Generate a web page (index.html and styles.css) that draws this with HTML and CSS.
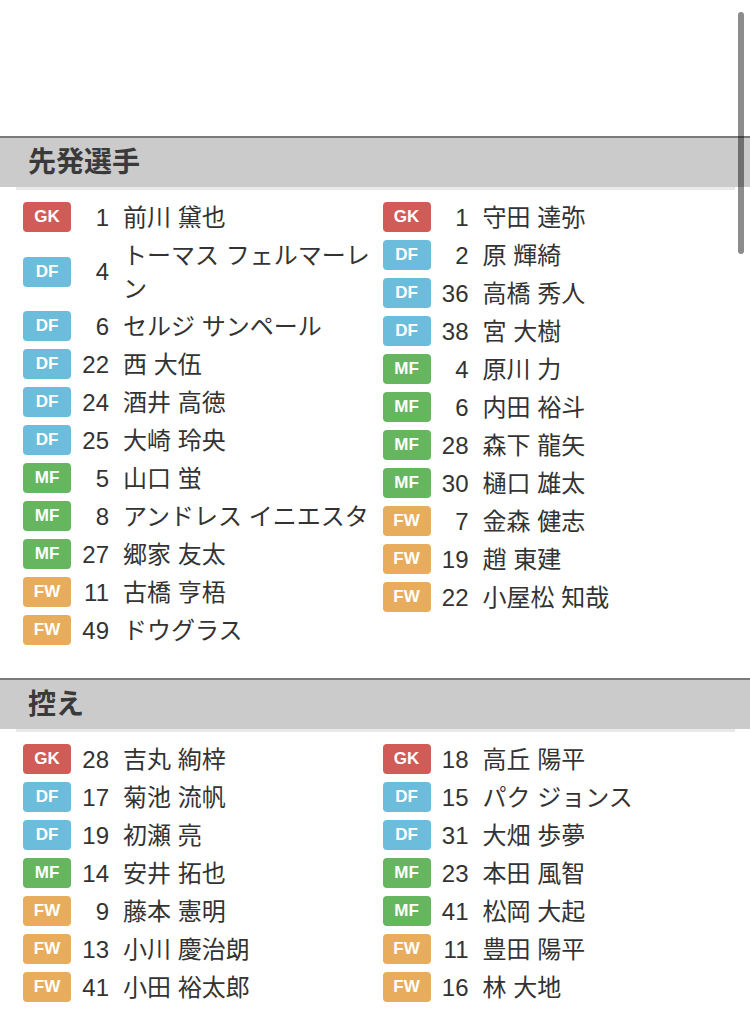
FILE: index.html
```html
<!DOCTYPE html>
<html lang="ja">
<head>
<meta charset="utf-8">
<title>メンバー</title>
<link rel="stylesheet" href="styles.css">
</head>
<body>
<div class="top-space"></div>

<section class="section">
  <h2 class="section-title">先発選手</h2>
  <div class="lineup">
    <ul class="team">
      <li class="row"><span class="badge gk">GK</span><span class="num">1</span><span class="name">前川 黛也</span></li>
      <li class="row"><span class="badge df">DF</span><span class="num">4</span><span class="name">トーマス フェルマーレン</span></li>
      <li class="row"><span class="badge df">DF</span><span class="num">6</span><span class="name">セルジ サンペール</span></li>
      <li class="row"><span class="badge df">DF</span><span class="num">22</span><span class="name">西 大伍</span></li>
      <li class="row"><span class="badge df">DF</span><span class="num">24</span><span class="name">酒井 高徳</span></li>
      <li class="row"><span class="badge df">DF</span><span class="num">25</span><span class="name">大崎 玲央</span></li>
      <li class="row"><span class="badge mf">MF</span><span class="num">5</span><span class="name">山口 蛍</span></li>
      <li class="row"><span class="badge mf">MF</span><span class="num">8</span><span class="name">アンドレス イニエスタ</span></li>
      <li class="row"><span class="badge mf">MF</span><span class="num">27</span><span class="name">郷家 友太</span></li>
      <li class="row"><span class="badge fw">FW</span><span class="num">11</span><span class="name">古橋 亨梧</span></li>
      <li class="row"><span class="badge fw">FW</span><span class="num">49</span><span class="name">ドウグラス</span></li>
    </ul>
    <ul class="team">
      <li class="row"><span class="badge gk">GK</span><span class="num">1</span><span class="name">守田 達弥</span></li>
      <li class="row"><span class="badge df">DF</span><span class="num">2</span><span class="name">原 輝綺</span></li>
      <li class="row"><span class="badge df">DF</span><span class="num">36</span><span class="name">高橋 秀人</span></li>
      <li class="row"><span class="badge df">DF</span><span class="num">38</span><span class="name">宮 大樹</span></li>
      <li class="row"><span class="badge mf">MF</span><span class="num">4</span><span class="name">原川 力</span></li>
      <li class="row"><span class="badge mf">MF</span><span class="num">6</span><span class="name">内田 裕斗</span></li>
      <li class="row"><span class="badge mf">MF</span><span class="num">28</span><span class="name">森下 龍矢</span></li>
      <li class="row"><span class="badge mf">MF</span><span class="num">30</span><span class="name">樋口 雄太</span></li>
      <li class="row"><span class="badge fw">FW</span><span class="num">7</span><span class="name">金森 健志</span></li>
      <li class="row"><span class="badge fw">FW</span><span class="num">19</span><span class="name">趙 東建</span></li>
      <li class="row"><span class="badge fw">FW</span><span class="num">22</span><span class="name">小屋松 知哉</span></li>
    </ul>
  </div>
</section>

<section class="section">
  <h2 class="section-title">控え</h2>
  <div class="lineup">
    <ul class="team">
      <li class="row"><span class="badge gk">GK</span><span class="num">28</span><span class="name">吉丸 絢梓</span></li>
      <li class="row"><span class="badge df">DF</span><span class="num">17</span><span class="name">菊池 流帆</span></li>
      <li class="row"><span class="badge df">DF</span><span class="num">19</span><span class="name">初瀬 亮</span></li>
      <li class="row"><span class="badge mf">MF</span><span class="num">14</span><span class="name">安井 拓也</span></li>
      <li class="row"><span class="badge fw">FW</span><span class="num">9</span><span class="name">藤本 憲明</span></li>
      <li class="row"><span class="badge fw">FW</span><span class="num">13</span><span class="name">小川 慶治朗</span></li>
      <li class="row"><span class="badge fw">FW</span><span class="num">41</span><span class="name">小田 裕太郎</span></li>
    </ul>
    <ul class="team">
      <li class="row"><span class="badge gk">GK</span><span class="num">18</span><span class="name">高丘 陽平</span></li>
      <li class="row"><span class="badge df">DF</span><span class="num">15</span><span class="name">パク ジョンス</span></li>
      <li class="row"><span class="badge df">DF</span><span class="num">31</span><span class="name">大畑 歩夢</span></li>
      <li class="row"><span class="badge mf">MF</span><span class="num">23</span><span class="name">本田 風智</span></li>
      <li class="row"><span class="badge mf">MF</span><span class="num">41</span><span class="name">松岡 大起</span></li>
      <li class="row"><span class="badge fw">FW</span><span class="num">11</span><span class="name">豊田 陽平</span></li>
      <li class="row"><span class="badge fw">FW</span><span class="num">16</span><span class="name">林 大地</span></li>
    </ul>
  </div>
</section>

<div class="scroll-indicator"></div>
</body>
</html>
```

FILE: styles.css
```css
html, body {
  margin: 0;
  padding: 0;
  background: #fff;
}

body {
  font-family: "Liberation Sans", "Noto Sans CJK JP", sans-serif;
  color: #333;
  width: 750px;
  overflow: hidden;
}

.top-space {
  height: 136px;
}

.section {
  margin-bottom: 29px;
}

.section-title {
  margin: 0;
  height: 49px;
  line-height: 49px;
  border-top: 2px solid #7b7b7b;
  background: #cbcbcb;
  padding-left: 28px;
  font-size: 28px;
  font-weight: bold;
  color: #3a3a3a;
}

.lineup {
  margin: 0 15px 0 16px;
  border-top: 3px solid #e9e9e9;
  padding-top: 8px;
  display: grid;
  grid-template-columns: 1fr 1fr;
}

.team {
  list-style: none;
  margin: 0;
  padding: 0;
}

.row {
  display: flex;
  align-items: center;
  min-height: 38px;
  padding: 2.5px 0 2.5px 7px;
  box-sizing: border-box;
}

.badge {
  flex: none;
  width: 48px;
  height: 30px;
  border-radius: 4px;
  display: flex;
  align-items: center;
  justify-content: center;
  color: #fff;
  font-family: "Liberation Sans", sans-serif;
  font-weight: bold;
  font-size: 17px;
}

.gk { background: #d15b56; }
.df { background: #6cbcdc; }
.mf { background: #66b660; }
.fw { background: #e8ad5c; }

.num {
  flex: none;
  width: 38px;
  text-align: right;
  font-size: 24px;
  line-height: 33px;
}

.name {
  flex: 1;
  margin-left: 14px;
  font-size: 24px;
  line-height: 33px;
  min-width: 0;
}

.scroll-indicator {
  position: fixed;
  top: 12px;
  right: 6px;
  width: 6px;
  height: 242px;
  border-radius: 3px;
  background: rgba(0, 0, 0, 0.45);
}
```
